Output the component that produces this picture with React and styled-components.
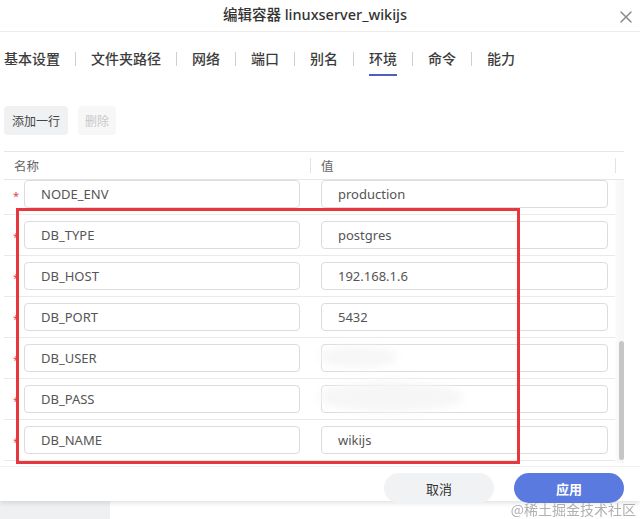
import React from "react";
import styled, { createGlobalStyle } from "styled-components";

const TABS = ["基本设置", "文件夹路径", "网络", "端口", "别名", "环境", "命令", "能力"];
const ACTIVE_TAB = "环境";

const ROWS = [
  { name: "NODE_ENV", value: "production" },
  { name: "DB_TYPE", value: "postgres" },
  { name: "DB_HOST", value: "192.168.1.6" },
  { name: "DB_PORT", value: "5432" },
  { name: "DB_USER", value: "", blur: 1 },
  { name: "DB_PASS", value: "", blur: 2 },
  { name: "DB_NAME", value: "wikijs" },
];

const App = () => {
  return (
    <>
      <GlobalStyle />
      <Page>
        <Dialog>
          <Header>
            <span />
            <Title>编辑容器 linuxserver_wikijs</Title>
            <CloseButton>
              <svg width="14" height="14" viewBox="0 0 14 14">
                <path
                  d="M2 2 L12 12 M12 2 L2 12"
                  stroke="#8a8a8a"
                  strokeWidth="1.5"
                  strokeLinecap="round"
                />
              </svg>
            </CloseButton>
          </Header>

          <TabBar>
            {TABS.map((tab, i) => (
              <React.Fragment key={tab}>
                {i > 0 && <TabSeparator />}
                <Tab $active={tab === ACTIVE_TAB}>{tab}</Tab>
              </React.Fragment>
            ))}
          </TabBar>

          <Toolbar>
            <ToolButton>添加一行</ToolButton>
            <ToolButton disabled>删除</ToolButton>
          </Toolbar>

          <Table>
            <HeadRow>
              <HeadCell>名称</HeadCell>
              <HeadCell $divider>值</HeadCell>
              <HeadCell $divider />
            </HeadRow>
            <BodyViewport>
              <BodyScroll>
                {ROWS.map((row) => (
                  <Row key={row.name}>
                    <NameCell>
                      <Required>*</Required>
                      <Input>{row.name}</Input>
                    </NameCell>
                    <ValueCell>
                      <Input>
                        {row.value}
                        {row.blur && <Smudge $wide={row.blur === 2} />}
                      </Input>
                    </ValueCell>
                  </Row>
                ))}
              </BodyScroll>
              <ScrollTrack />
              <ScrollThumb />
            </BodyViewport>
            <Highlight />
          </Table>

          <Footer>
            <FooterButton>取消</FooterButton>
            <FooterButton $primary>应用</FooterButton>
          </Footer>
        </Dialog>
        <Below>
          <SideStrip />
          <Watermark>@稀土掘金技术社区</Watermark>
        </Below>
      </Page>
    </>
  );
};

export default App;

const GlobalStyle = createGlobalStyle`
  html, body {
    margin: 0;
    padding: 0;
    background: #ffffff;
  }
  body {
    font-family: "Noto Sans", "Noto Sans CJK SC", sans-serif;
    color: #333;
  }
  * {
    box-sizing: border-box;
  }
`;

const Page = styled.div`
  width: 640px;
  height: 519px;
  overflow: hidden;
  display: flex;
  flex-direction: column;
`;

const Dialog = styled.div`
  position: relative;
  z-index: 1;
  height: 501px;
  flex-shrink: 0;
  background: #ffffff;
  display: flex;
  flex-direction: column;
  box-shadow: 0 2px 5px rgba(0, 0, 0, 0.12);
`;

const Header = styled.div`
  height: 32px;
  display: grid;
  grid-template-columns: 1fr auto 1fr;
  align-items: center;
  border-bottom: 1px solid #ececec;
`;

const Title = styled.div`
  font-size: 14.5px;
  font-weight: 500;
  color: #333;
  line-height: 1;
  margin: -3px 0 0 -10px;
`;

const CloseButton = styled.div`
  justify-self: end;
  display: flex;
  padding-right: 7px;
  margin-top: 2px;
`;

const TabBar = styled.div`
  height: 44px;
  display: flex;
  align-items: center;
  padding-left: 4px;
`;

const Tab = styled.div`
  position: relative;
  font-size: 14px;
  font-weight: 500;
  color: #3c3c3c;
  line-height: 20px;
  margin-top: 10px;

  &::after {
    content: "";
    display: ${(p) => (p.$active ? "block" : "none")};
    position: absolute;
    left: 0;
    right: 0;
    bottom: -7px;
    height: 2px;
    background: #4b5fc4;
  }
`;

const TabSeparator = styled.div`
  width: 1px;
  height: 14px;
  background: #cfcfcf;
  margin: 10px 15px 0;
`;

const Toolbar = styled.div`
  display: flex;
  gap: 10px;
  padding: 30px 0 0 4px;
`;

const ToolButton = styled.div`
  height: 29px;
  padding: 0 ${(p) => (p.disabled ? "7px" : "8px")};
  border-radius: 4px;
  display: flex;
  align-items: center;
  font-size: 12px;
  background: ${(p) => (p.disabled ? "#f7f7f8" : "#f0f1f3")};
  color: ${(p) => (p.disabled ? "#c9c9c9" : "#444")};
`;

const Table = styled.div`
  position: relative;
  margin: 16px 16px 0 4px;
  border-top: 1px solid #e6e6e6;
`;

const HeadRow = styled.div`
  height: 28px;
  display: grid;
  grid-template-columns: 306px 305px 1fr;
  align-items: center;
  border-bottom: 1px solid #e6e6e6;
`;

const HeadCell = styled.div`
  height: 15px;
  display: flex;
  align-items: center;
  padding-left: 10px;
  font-size: 12.5px;
  color: #666;
  border-left: ${(p) => (p.$divider ? "1px solid #e3e3e3" : "none")};
`;

const BodyViewport = styled.div`
  position: relative;
  height: 283px;
  overflow: hidden;
`;

const BodyScroll = styled.div`
  margin-top: -6px;
  width: 611px;
`;

const Row = styled.div`
  height: 41px;
  display: grid;
  grid-template-columns: 306px 305px;
  align-items: center;
  border-bottom: 1px solid #e9e9e9;
`;

const NameCell = styled.div`
  display: flex;
  align-items: center;
  padding: 0 10px 0 20px;
  position: relative;
`;

const ValueCell = styled.div`
  display: flex;
  align-items: center;
  padding: 0 7px 0 11px;
`;

const Required = styled.span`
  position: absolute;
  left: 9px;
  top: 8px;
  color: #e0424a;
  font-size: 11px;
`;

const Input = styled.div`
  position: relative;
  flex: 1;
  height: 28px;
  border: 1px solid #dcdcdc;
  border-radius: 4px;
  display: flex;
  align-items: center;
  padding-left: 16px;
  font-size: 13px;
  color: #555;
`;

const Smudge = styled.span`
  position: absolute;
  left: -4px;
  top: ${(p) => (p.$wide ? "-4px" : "2px")};
  width: ${(p) => (p.$wide ? "145px" : "80px")};
  height: ${(p) => (p.$wide ? "30px" : "20px")};
  background: #f6f6f6;
  border-radius: 50%;
  filter: blur(4px);
`;

const ScrollTrack = styled.div`
  position: absolute;
  top: 0;
  right: 0;
  width: 9px;
  height: 100%;
  background: linear-gradient(to right, #fbfbfb, #f6f6f6);
`;

const ScrollThumb = styled.div`
  position: absolute;
  top: 161px;
  right: 0px;
  width: 5px;
  height: 119px;
  border-radius: 3px;
  background: #c6c6c6;
`;

const Highlight = styled.div`
  position: absolute;
  left: 12px;
  top: 56px;
  width: 504px;
  height: 256px;
  border: 3px solid #e5373c;
  pointer-events: none;
`;

const Footer = styled.div`
  flex: 1;
  display: flex;
  justify-content: flex-end;
  align-items: flex-end;
  gap: 20px;
  padding: 0 16px 0 0;
  border-top: 1px solid #f0f0f0;
  margin-top: 3px;
`;

const FooterButton = styled.div`
  width: 110px;
  height: 30px;
  border-radius: 15px;
  display: flex;
  align-items: center;
  justify-content: center;
  font-size: 13px;
  font-weight: ${(p) => (p.$primary ? 600 : 400)};
  color: ${(p) => (p.$primary ? "#ffffff" : "#333")};
  background: ${(p) => (p.$primary ? "#5a7ae0" : "#f1f2f4")};
  margin-bottom: -2px;
`;

const Below = styled.div`
  position: relative;
  flex: 1;
  display: flex;
`;

const SideStrip = styled.div`
  width: 110px;
  background: #eff0f2;
`;

const Watermark = styled.div`
  position: absolute;
  right: 4px;
  top: -2px;
  z-index: 2;
  font-size: 14px;
  color: #a8a8a8;
  font-family: "Noto Sans CJK SC", serif;
  opacity: 0.9;
`;
